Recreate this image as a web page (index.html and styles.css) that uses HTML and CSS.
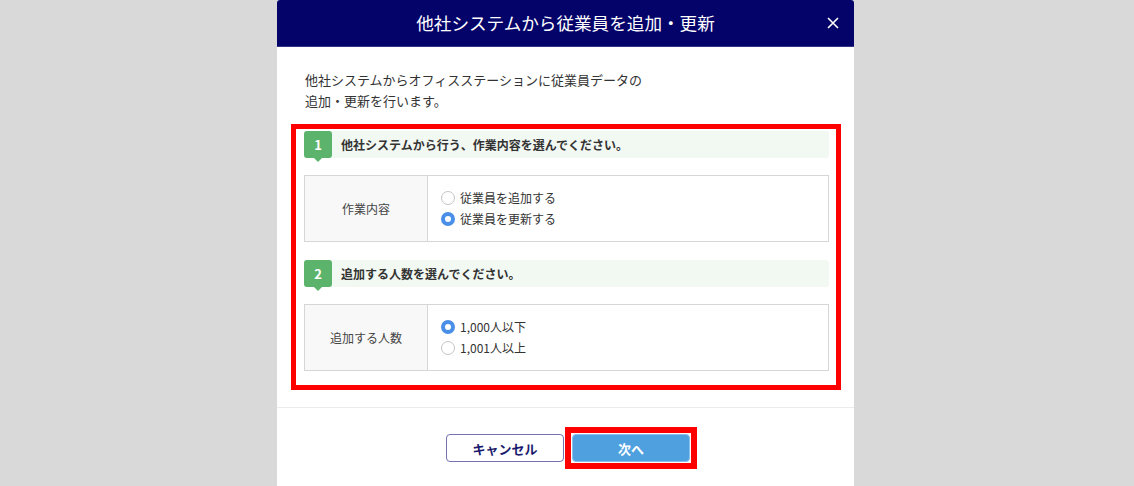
FILE: index.html
```html
<!DOCTYPE html>
<html lang="ja">
<head>
<meta charset="utf-8">
<title>他社システムから従業員を追加・更新</title>
<link rel="stylesheet" href="styles.css">
</head>
<body>
<div class="modal">
  <div class="modal-header">
    <h1 class="modal-title">他社システムから従業員を追加・更新</h1>
    <button class="close-btn" aria-label="閉じる">
      <svg width="12" height="12" viewBox="0 0 12 12"><path d="M1 1 L11 11 M11 1 L1 11" stroke="#fff" stroke-width="1.6" fill="none"/></svg>
    </button>
  </div>
  <div class="modal-body">
    <p class="desc">他社システムからオフィスステーションに従業員データの<br>追加・更新を行います。</p>
    <div class="highlight">
      <div class="step">
        <div class="step-head"><span class="badge">1</span><span class="step-text">他社システムから行う、作業内容を選んでください。</span></div>
        <div class="form-row">
          <div class="form-label">作業内容</div>
          <div class="form-field">
            <label class="radio"><span class="circle"></span>従業員を追加する</label>
            <label class="radio"><span class="circle checked"></span>従業員を更新する</label>
          </div>
        </div>
      </div>
      <div class="step">
        <div class="step-head"><span class="badge">2</span><span class="step-text">追加する人数を選んでください。</span></div>
        <div class="form-row">
          <div class="form-label">追加する人数</div>
          <div class="form-field">
            <label class="radio"><span class="circle checked"></span>1,000人以下</label>
            <label class="radio"><span class="circle"></span>1,001人以上</label>
          </div>
        </div>
      </div>
    </div>
  </div>
  <div class="modal-footer">
    <button class="btn btn-cancel">キャンセル</button>
    <span class="next-mark"><button class="btn btn-next">次へ</button></span>
  </div>
</div>
</body>
</html>
```

FILE: styles.css
```css
* { box-sizing: border-box; }
html, body { margin: 0; padding: 0; }
body {
  background: #d9d9d9;
  font-family: "Noto Sans CJK JP", "Noto Sans", sans-serif;
  color: #333;
  height: 486px;
  overflow: hidden;
}
.modal {
  width: 577px;
  margin-left: 277px;
  background: #fff;
  border-radius: 3px 3px 0 0;
  min-height: 500px;
}
.modal-header {
  height: 47px;
  background: #03036a;
  border-bottom: 1px solid #33338a;
  border-radius: 3px 3px 0 0;
  display: flex;
  align-items: center;
  justify-content: center;
  position: relative;
}
.modal-title {
  margin: 0;
  font-size: 17.6px;
  font-weight: normal;
  color: #fff;
  line-height: 24px;
}
.close-btn {
  position: absolute;
  right: 14px;
  top: 16px;
  width: 14px;
  height: 14px;
  padding: 0;
  border: 0;
  background: none;
  display: flex;
  align-items: center;
  justify-content: center;
}
.modal-body {
  padding: 22px 13px 17px 14px;
  border-bottom: 1px solid #ececec;
}
.desc {
  margin: 0 0 13px 14px;
  font-size: 13px;
  line-height: 21px;
  color: #333;
}
.highlight {
  border: 5px solid #ff0000;
  padding: 2px 7px 14px 8px;
}
.step + .step { margin-top: 18px; }
.step-head {
  height: 27px;
  background: #f2f8f2;
  border-radius: 3px;
  display: flex;
  align-items: center;
}
.badge {
  position: relative;
  width: 28px;
  height: 27px;
  background: #5cb36b;
  color: #fff;
  font-weight: bold;
  font-size: 13px;
  border-radius: 3px;
  display: flex;
  align-items: center;
  justify-content: center;
  flex: none;
}
.badge::after {
  content: "";
  position: absolute;
  left: 10px;
  bottom: -4px;
  border-left: 4px solid transparent;
  border-right: 4px solid transparent;
  border-top: 4px solid #5cb36b;
}
.step-text {
  margin-left: 9px;
  font-size: 12px;
  font-weight: bold;
  color: #333;
  line-height: 16px;
}
.form-row {
  margin-top: 17px;
  display: flex;
  border: 1px solid #d6d6d6;
}
.form-label {
  width: 123px;
  flex: none;
  background: #f8f8f8;
  border-right: 1px solid #d6d6d6;
  font-size: 12px;
  color: #444;
  display: flex;
  align-items: center;
  justify-content: center;
}
.form-field {
  flex: 1;
  padding: 11px 14px 12px 13px;
  display: flex;
  flex-direction: column;
}
.radio {
  display: flex;
  align-items: center;
  height: 21px;
  font-size: 12px;
  color: #333;
}
.circle {
  width: 14px;
  height: 14px;
  border-radius: 50%;
  border: 1px solid #c4c4c4;
  background: #fff;
  margin-right: 5px;
  flex: none;
}
.circle.checked {
  border: 4px solid #4a8fe7;
}
.modal-footer {
  padding: 19px 0 0 12px;
  display: flex;
  justify-content: center;
  align-items: center;
  gap: 1px;
}
.btn {
  width: 118px;
  height: 28px;
  border-radius: 4px;
  font-family: "Noto Sans CJK JP", "Noto Sans", sans-serif;
  font-weight: bold;
  font-size: 13px;
  line-height: 1;
  padding: 0;
  display: block;
}
.btn-cancel {
  background: #fff;
  color: #1b1b6e;
  border: 1px solid #7272b0;
}
.next-mark {
  display: block;
  border: 6px solid #ff0000;
  padding: 1px;
  background: #fff;
}
.btn-next {
  background: #4fa0df;
  color: #fff;
  border: 1px solid #8ac0ea;
}
```
